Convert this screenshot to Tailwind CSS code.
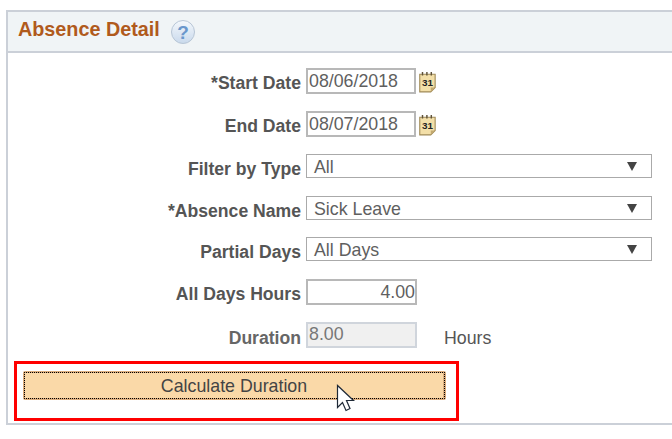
<!DOCTYPE html>
<html lang="en">
<head>
    <meta charset="UTF-8">
    <title>Absence Detail</title>
    <script src="https://cdn.jsdelivr.net/npm/@tailwindcss/browser@4"></script>
</head>
<body class="bg-white w-[672px] h-[439px] overflow-hidden font-['Liberation_Sans',Arial,sans-serif]">
    <div class="pt-[10px] pl-[6px]">
        <!-- Panel -->
        <section class="w-[666px] h-[415px] border-2 border-[#cbd0d8] border-r-0">
            <!-- Header -->
            <div class="flex items-center bg-[#f0f4f6] border-b-2 border-[#cbd0d8] h-[41px] pl-[10px]">
                <h2 class="text-[19.8px] font-bold text-[#b05a1c] leading-none mb-[3px]">Absence Detail</h2>
                <svg class="ml-[10px]" width="26" height="26" viewBox="0 0 26 26">
                    <defs>
                        <linearGradient id="help" x1="0" y1="0" x2="0" y2="1">
                            <stop offset="0" stop-color="#f4f8fc"/>
                            <stop offset="1" stop-color="#c9d9ec"/>
                        </linearGradient>
                    </defs>
                    <circle cx="13" cy="13" r="11.5" fill="url(#help)" stroke="#b8c6d6"/>
                    <text x="13" y="20" text-anchor="middle" font-family="Liberation Sans" font-size="19" font-weight="bold" fill="#6a97cc">?</text>
                </svg>
            </div>

            <!-- Form rows -->
            <div class="flex flex-col text-[17.8px] text-[#555]">
                <div class="flex items-center h-[26px] mt-[15px]">
                    <label class="w-[298px] text-right font-bold text-[17.6px] pr-[5px] pt-[4px]">*Start Date</label>
                    <div class="w-[110px] h-[26px] border-2 border-[#b8b8b8] pl-[1px] leading-[22px] text-[#5f5f5f]">08/06/2018</div>
                    <svg class="ml-[2px] mt-[1px]" width="20" height="22" viewBox="0 0 18 20">
                        <path d="M1.5 3h14v12l-4 4h-10z" fill="#f3dfa8" stroke="#a08a58"/>
                        <path d="M11.5 19v-4h4z" fill="#c2a970"/>
                        <path d="M4 1v3M8 1v3M12 1v3" stroke="#5f5238" stroke-width="1.3"/>
                        <text x="8.5" y="14" text-anchor="middle" font-family="Liberation Sans" font-size="9" font-weight="bold" fill="#222">31</text>
                    </svg>
                </div>
                <div class="flex items-center h-[26px] mt-[17px]">
                    <label class="w-[298px] text-right font-bold text-[17.6px] pr-[5px] pt-[4px]">End Date</label>
                    <div class="w-[110px] h-[26px] border-2 border-[#b8b8b8] pl-[1px] leading-[22px] text-[#5f5f5f]">08/07/2018</div>
                    <svg class="ml-[2px] mt-[1px]" width="20" height="22" viewBox="0 0 18 20">
                        <path d="M1.5 3h14v12l-4 4h-10z" fill="#f3dfa8" stroke="#a08a58"/>
                        <path d="M11.5 19v-4h4z" fill="#c2a970"/>
                        <path d="M4 1v3M8 1v3M12 1v3" stroke="#5f5238" stroke-width="1.3"/>
                        <text x="8.5" y="14" text-anchor="middle" font-family="Liberation Sans" font-size="9" font-weight="bold" fill="#222">31</text>
                    </svg>
                </div>
                <div class="flex items-center h-[24px] mt-[17px]">
                    <label class="w-[298px] text-right font-bold text-[17.6px] pr-[5px] pt-[7px]">Filter by Type</label>
                    <div class="relative w-[346px] h-[24px] border border-[#aaa] pl-[7px] leading-[24px] text-[#5f5f5f]">All
                        <span class="absolute right-[14px] top-[7px] w-0 h-0 border-x-[5px] border-x-transparent border-t-[9px] border-t-[#444]"></span>
                    </div>
                </div>
                <div class="flex items-center h-[24px] mt-[18px]">
                    <label class="w-[298px] text-right font-bold text-[17.6px] pr-[5px] pt-[7px]">*Absence Name</label>
                    <div class="relative w-[346px] h-[24px] border border-[#aaa] pl-[7px] leading-[24px] text-[#5f5f5f]">Sick Leave
                        <span class="absolute right-[14px] top-[7px] w-0 h-0 border-x-[5px] border-x-transparent border-t-[9px] border-t-[#444]"></span>
                    </div>
                </div>
                <div class="flex items-center h-[24px] mt-[17px]">
                    <label class="w-[298px] text-right font-bold text-[17.6px] pr-[5px] pt-[7px]">Partial Days</label>
                    <div class="relative w-[346px] h-[24px] border border-[#aaa] pl-[7px] leading-[24px] text-[#5f5f5f]">All Days
                        <span class="absolute right-[14px] top-[7px] w-0 h-0 border-x-[5px] border-x-transparent border-t-[9px] border-t-[#444]"></span>
                    </div>
                </div>
                <div class="flex items-center h-[26px] mt-[18px]">
                    <label class="w-[298px] text-right font-bold text-[17.6px] pr-[5px] pt-[4px]">All Days Hours</label>
                    <div class="w-[111px] h-[26px] border-2 border-[#b8b8b8] text-right leading-[22px] text-[#5f5f5f]">4.00</div>
                </div>
                <div class="flex items-center h-[26px] mt-[17px]">
                    <label class="w-[298px] text-right font-bold text-[17.6px] pr-[5px] pt-[6px] text-[#666]">Duration</label>
                    <div class="w-[111px] h-[26px] border-2 border-[#d0d5dc] bg-[#f0f0f0] pl-[1px] leading-[21px] text-[#777]">8.00</div>
                    <span class="ml-[27px] pt-[6px]">Hours</span>
                </div>
            </div>

            <!-- Highlighted button -->
            <div class="relative ml-[6px] mt-[13px] w-[445px] h-[60px] border-[3px] border-[#ff0000] pl-[6px] pt-[7px]">
                <button class="block w-[423px] h-[29px] rounded-[2px] bg-[#fad9a8] border-2 border-r-[3px] border-[#dcae7e] outline-dotted outline-1 outline-black -outline-offset-2 text-[17.8px] text-[#444] pb-[5px]">Calculate Duration</button>
                <svg class="absolute left-[319px] top-[20px]" width="20" height="30" viewBox="0 0 20 30">
                    <path d="M1.5 1.5v22l5-5 3.5 8 4-2-3.5-8h7z" fill="#fff" stroke="#1f2937" stroke-width="1.2" stroke-linejoin="miter"/>
                </svg>
            </div>
        </section>
    </div>
</body>
</html>
